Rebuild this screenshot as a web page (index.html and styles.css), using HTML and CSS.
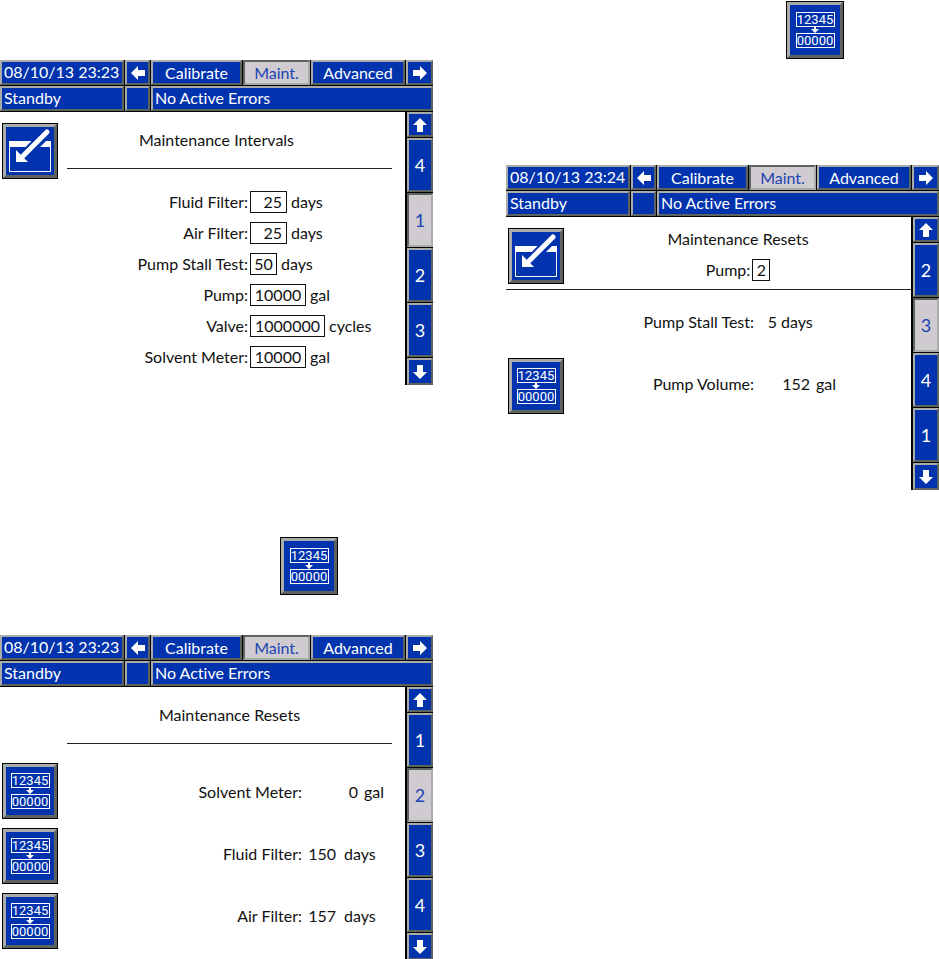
FILE: index.html
```html
<!DOCTYPE html>
<html lang="en">

<head>
    <meta charset="UTF-8">
    <meta name="viewport" content="width=device-width, initial-scale=1.0">
    <title>Maintenance</title>
    <link rel="stylesheet" href="styles.css">
</head>

<body>
    <!-- shared icons -->
    <svg class="symbols" aria-hidden="true">
        <symbol id="arrow" viewBox="0 0 14 14">
            <path d="M7 0L14 7H10V14H4V7H0Z" fill="#fff" />
        </symbol>
        <symbol id="edit" viewBox="0 0 48 48">
            <path d="M3 14H30L24 20H3Z M40 14H45V20H34Z" fill="#fff" />
            <path d="M3.5 19V44.500H44.500V19" fill="none" stroke="#fff" />
            <path d="M41 5L18 28" stroke="#0033ad" stroke-width="9" />
            <path d="M41 5L17 29" stroke="#fff" stroke-width="5" stroke-linecap="round" />
            <path d="M10 23L22 35H10Z" fill="#fff" />
        </symbol>
    </svg>

    <main class="page">
        <div class="column column-left">
            <!-- intervals -->
            <section class="screen">
                <header class="top">
                    <div class="bar tabs">
                        <div class="cell">08/10/13 23:23</div>
                        <button class="cell mid" aria-label="Previous"><svg class="arrow left"><use href="#arrow" /></svg></button>
                        <button class="cell mid">Calibrate</button>
                        <button class="cell mid sel">Maint.</button>
                        <button class="cell mid">Advanced</button>
                        <button class="cell mid" aria-label="Next"><svg class="arrow right"><use href="#arrow" /></svg></button>
                    </div>
                    <div class="bar status">
                        <div class="cell">Standby</div>
                        <div class="cell"></div>
                        <div class="cell">No Active Errors</div>
                    </div>
                </header>
                <div class="content">
                    <div class="head">
                        <button class="key" aria-label="Edit"><svg class="edit"><use href="#edit" /></svg></button>
                        <h2 class="title ruled">Maintenance Intervals</h2>
                    </div>
                    <form class="fields">
                        <label for="fluid">Fluid Filter:</label>
                        <div class="field"><input id="fluid" class="w3" value="25">days</div>
                        <label for="air">Air Filter:</label>
                        <div class="field"><input id="air" class="w3" value="25">days</div>
                        <label for="stall">Pump Stall Test:</label>
                        <div class="field"><input id="stall" class="w2" value="50">days</div>
                        <label for="pump">Pump:</label>
                        <div class="field"><input id="pump" class="w5" value="10000">gal</div>
                        <label for="valve">Valve:</label>
                        <div class="field"><input id="valve" class="w7" value="1000000">cycles</div>
                        <label for="solvent">Solvent Meter:</label>
                        <div class="field"><input id="solvent" class="w5" value="10000">gal</div>
                    </form>
                </div>
                <nav class="side">
                    <button class="cell mid" aria-label="Up"><svg class="arrow"><use href="#arrow" /></svg></button>
                    <button class="cell mid num">4</button>
                    <button class="cell mid num sel">1</button>
                    <button class="cell mid num">2</button>
                    <button class="cell mid num">3</button>
                    <button class="cell mid" aria-label="Down"><svg class="arrow down"><use href="#arrow" /></svg></button>
                </nav>
            </section>

            <button class="key big" aria-label="Reset counter">
                <span class="count">12345</span>
                <svg class="drop" viewBox="0 0 8 6"><path d="M3 0H5V2H8L4 6L0 2H3Z" fill="#fff" /></svg>
                <span class="count">00000</span>
            </button>

            <!-- resets -->
            <section class="screen">
                <header class="top">
                    <div class="bar tabs">
                        <div class="cell">08/10/13 23:23</div>
                        <button class="cell mid" aria-label="Previous"><svg class="arrow left"><use href="#arrow" /></svg></button>
                        <button class="cell mid">Calibrate</button>
                        <button class="cell mid sel">Maint.</button>
                        <button class="cell mid">Advanced</button>
                        <button class="cell mid" aria-label="Next"><svg class="arrow right"><use href="#arrow" /></svg></button>
                    </div>
                    <div class="bar status">
                        <div class="cell">Standby</div>
                        <div class="cell"></div>
                        <div class="cell">No Active Errors</div>
                    </div>
                </header>
                <div class="content">
                    <div class="head">
                        <h2 class="title ruled">Maintenance Resets</h2>
                    </div>
                    <div class="resets">
                        <div class="keys">
                            <button class="key" aria-label="Reset solvent meter">
                                <span class="count">12345</span>
                                <svg class="drop" viewBox="0 0 8 6"><path d="M3 0H5V2H8L4 6L0 2H3Z" fill="#fff" /></svg>
                                <span class="count">00000</span>
                            </button>
                            <button class="key" aria-label="Reset fluid filter">
                                <span class="count">12345</span>
                                <svg class="drop" viewBox="0 0 8 6"><path d="M3 0H5V2H8L4 6L0 2H3Z" fill="#fff" /></svg>
                                <span class="count">00000</span>
                            </button>
                            <button class="key" aria-label="Reset air filter">
                                <span class="count">12345</span>
                                <svg class="drop" viewBox="0 0 8 6"><path d="M3 0H5V2H8L4 6L0 2H3Z" fill="#fff" /></svg>
                                <span class="count">00000</span>
                            </button>
                        </div>
                        <div class="values">
                            <span class="name">Solvent Meter:</span>
                            <div class="value wide"><b>0</b>gal</div>
                            <span class="name">Fluid Filter:</span>
                            <div class="value"><b>150</b>days</div>
                            <span class="name">Air Filter:</span>
                            <div class="value"><b>157</b>days</div>
                        </div>
                    </div>
                </div>
                <nav class="side">
                    <button class="cell mid" aria-label="Up"><svg class="arrow"><use href="#arrow" /></svg></button>
                    <button class="cell mid num">1</button>
                    <button class="cell mid num sel">2</button>
                    <button class="cell mid num">3</button>
                    <button class="cell mid num">4</button>
                    <button class="cell mid" aria-label="Down"><svg class="arrow down"><use href="#arrow" /></svg></button>
                </nav>
            </section>
        </div>

        <div class="column column-right">
            <button class="key big" aria-label="Reset counter">
                <span class="count">12345</span>
                <svg class="drop" viewBox="0 0 8 6"><path d="M3 0H5V2H8L4 6L0 2H3Z" fill="#fff" /></svg>
                <span class="count">00000</span>
            </button>

            <!-- pump resets -->
            <section class="screen">
                <header class="top">
                    <div class="bar tabs">
                        <div class="cell">08/10/13 23:24</div>
                        <button class="cell mid" aria-label="Previous"><svg class="arrow left"><use href="#arrow" /></svg></button>
                        <button class="cell mid">Calibrate</button>
                        <button class="cell mid sel">Maint.</button>
                        <button class="cell mid">Advanced</button>
                        <button class="cell mid" aria-label="Next"><svg class="arrow right"><use href="#arrow" /></svg></button>
                    </div>
                    <div class="bar status">
                        <div class="cell">Standby</div>
                        <div class="cell"></div>
                        <div class="cell">No Active Errors</div>
                    </div>
                </header>
                <div class="content">
                    <div class="head full">
                        <button class="key" aria-label="Edit"><svg class="edit"><use href="#edit" /></svg></button>
                        <div class="title">
                            <h2>Maintenance Resets</h2>
                            <div class="pick">
                                <label for="which">Pump:</label>
                                <input id="which" class="w1" value="2">
                            </div>
                        </div>
                    </div>
                    <div class="resets">
                        <div class="keys last">
                            <button class="key" aria-label="Reset pump volume">
                                <span class="count">12345</span>
                                <svg class="drop" viewBox="0 0 8 6"><path d="M3 0H5V2H8L4 6L0 2H3Z" fill="#fff" /></svg>
                                <span class="count">00000</span>
                            </button>
                        </div>
                        <div class="values pump">
                            <span class="name">Pump Stall Test:</span>
                            <div class="value short"><b>5</b>days</div>
                            <span class="name">Pump Volume:</span>
                            <div class="value wide"><b>152</b>gal</div>
                        </div>
                    </div>
                </div>
                <nav class="side">
                    <button class="cell mid" aria-label="Up"><svg class="arrow"><use href="#arrow" /></svg></button>
                    <button class="cell mid num">2</button>
                    <button class="cell mid num sel">3</button>
                    <button class="cell mid num">4</button>
                    <button class="cell mid num">1</button>
                    <button class="cell mid" aria-label="Down"><svg class="arrow down"><use href="#arrow" /></svg></button>
                </nav>
            </section>
        </div>
    </main>
</body>

</html>
```
FILE: styles.css
```css
* {
    box-sizing: border-box;
}

body {
    margin: 0;
    background: #fff;
    color: #111;
    font: 16px/22px Lato, "Liberation Sans", sans-serif;
    font-variant-ligatures: none;
}

button,
input {
    margin: 0;
    padding: 0;
    border-radius: 0;
    font: inherit;
    color: inherit;
}

h2 {
    margin: 0;
    font: inherit;
}

.symbols {
    display: none;
}

.page {
    display: grid;
    grid-template-columns: 1fr 1fr;
    gap: 73px;
}

.column {
    display: flex;
    flex-direction: column;
}

.column-left {
    padding-top: 60px;
}

/* one display */
.screen {
    display: grid;
    grid-template-columns: 1fr 28px;
}

.top {
    grid-column: 1 / 3;
    display: grid;
    gap: 1px;
    padding-bottom: 1px;
    background: #000;
}

.bar {
    display: grid;
    grid-auto-rows: 25px;
    column-gap: 1px;
}

.tabs {
    grid-template-columns: 124fr 25px 91fr 67fr 94fr 27px;
}

.status {
    grid-template-columns: 124fr 25px 282fr;
}

.cell {
    padding: 0 2px;
    border: 2px solid;
    border-color: #aaacaa #5d635d #5d635d #aaacaa;
    background: #0033ad;
    color: #fff;
    line-height: 20px;
    white-space: nowrap;
}

.mid {
    display: flex;
    align-items: center;
    justify-content: center;
    padding: 0;
}

.sel {
    border-color: #5d635d #aaacaa #aaacaa #5d635d;
    background: #d0cbd0;
    color: #1c43b4;
}

.arrow {
    width: 14px;
    height: 14px;
}

.left {
    transform: rotate(-90deg);
}

.right {
    transform: rotate(90deg);
}

.down {
    transform: rotate(180deg);
}

.side {
    display: grid;
    grid-template-rows: 25px repeat(4, 54px) 27px;
    gap: 1px;
    padding-left: 2px;
    background: #000;
}

.num {
    font-size: 18px;
}

/* square keys */
.key {
    display: flex;
    flex-direction: column;
    align-items: center;
    justify-content: center;
    flex: none;
    width: 56px;
    height: 56px;
    border: 4px solid;
    border-color: #aaacaa #5d635d #5d635d #aaacaa;
    outline: 1px solid #000;
    outline-offset: -1px;
    background: #0033ad;
    color: #fff;
}

.big {
    width: 58px;
    height: 58px;
}

.column-left .big {
    margin: 152px 0 40px 280px;
}

.column-right .big {
    margin: 1px 0 106px 280px;
}

.edit {
    width: 48px;
    height: 48px;
}

.count {
    width: 39px;
    height: 15px;
    border: 1px solid #fff;
    font-family: Roboto, "Liberation Sans", sans-serif;
    font-size: 13px;
    line-height: 13px;
    text-align: center;
}

.drop {
    width: 8px;
    height: 6px;
}

/* heading */
.head {
    display: flex;
    justify-content: flex-end;
    gap: 9px;
    height: 57px;
    padding-right: 13px;
}

.head .key {
    margin: 11px 0 0 2px;
}

.title {
    flex: 1;
    text-align: center;
}

.ruled {
    padding: 17px 26px 17px 0;
    border-bottom: 1px solid #222;
}

.head .ruled:first-child {
    margin-left: 67px;
    padding-right: 0;
}

.full {
    height: 73px;
    padding-right: 0;
    border-bottom: 1px solid #222;
}

.full .title {
    padding: 11px 8px 0 0;
}

.pick {
    display: flex;
    justify-content: center;
    gap: 2px;
    padding-top: 9px;
}

input {
    width: 56px;
    height: 22px;
    border: 1px solid #111;
    background: #fff;
    text-align: center;
}

.w1 {
    width: 18px;
}

.w2 {
    width: 27px;
}

.w3 {
    width: 37px;
    padding-right: 4px;
    text-align: right;
}

.w7 {
    width: 75px;
}

.fields {
    display: grid;
    grid-template-columns: 248fr 155fr;
    gap: 9px 2px;
    padding-top: 22px;
}

.fields label {
    text-align: right;
}

.field {
    display: flex;
    gap: 4px;
}

.resets {
    display: grid;
    grid-template-columns: 56px 1fr;
    padding: 19px 0 0 2px;
}

.keys {
    display: grid;
    gap: 9px;
    align-content: start;
}

.last {
    padding-top: 49px;
}

.values {
    display: grid;
    grid-template-columns: 244fr 97fr;
    grid-auto-rows: 22px;
    gap: 40px 6px;
    padding-top: 18px;
}

.name {
    text-align: right;
}

.value {
    display: flex;
    gap: 8px;
}

.value b {
    width: 28px;
    font-weight: normal;
    text-align: right;
}

.wide {
    gap: 6px;
}

.wide b {
    width: 50px;
}

.short {
    gap: 4px;
}

.short b {
    width: 17px;
}

.pump {
    grid-template-columns: 190fr 151fr;
    padding-top: 2px;
}
```
